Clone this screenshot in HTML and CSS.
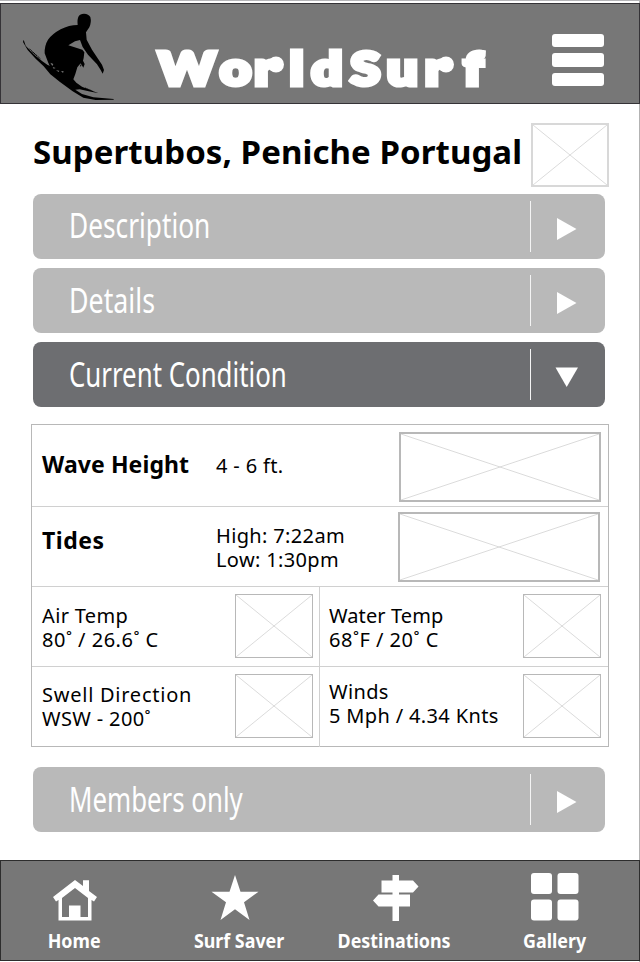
FILE: index.html
```html
<!DOCTYPE html>
<html lang="en">
<head>
<meta charset="utf-8">
<title>WorldSurf</title>
<link rel="stylesheet" href="styles.css">
</head>
<body>
<svg class="defs" aria-hidden="true">
  <symbol id="cross" viewBox="0 0 100 100" preserveAspectRatio="none">
    <path d="M0 0L100 100M100 0L0 100" fill="none" stroke="#d2d2d2" stroke-width="0.8" vector-effect="non-scaling-stroke"/>
  </symbol>
</svg>
<div class="page">
  <header class="header">
    <svg class="surfer" viewBox="0 12 390 294">
      <path d="M236 49Q240 41 252 41Q266 42 271 51Q275 66 268 82L258 97L260 119L276 149L299 184L306 194L312 210L308 221L302 210L291 193L264 164L248 141L240 120L225 124L205 136L247 149L253 157L251 174L249 182L254 192L250 203L242 190L232 202L226 222L220 238L229 248L246 260L270 270L296 280L266 274L239 268L226 269L246 282L280 292L341 297V299L287 300L250 293L218 274L180 246L151 223L131 199L107 176L83 150L69 126L71 119L77 137L101 163L127 184L143 195L149 198L143 184L134 160Q133 137 144 119Q158 101 182 88Q207 75 233 75Q231 58 236 49Z"/>
      <path d="M142 196L163 204L206 208L211 219L204 234L182 224L155 216Z" opacity=".85"/>
      <path d="M146 184l12 7 7 11M153 204l19-3M164 215l16 3 12-3M88 146l20 20M97 155l24 21M245 187l-4 14M255 264l22 9" fill="none" stroke="#000" stroke-width="3" stroke-dasharray="5 2"/>
      <path d="M151 188l9 4-3 6zM168 211l10 1-2 4zM183 213l8 1-2 5zM158 201l9 3-6 2z" fill="#777"/>
    </svg>
    <svg class="logo" viewBox="0 0 340 60" role="img">
      <text class="logo-text" transform="scale(1.17 1)" y="44.500" x="7.3 59.900 89.300 119.500 138 171.300 202.500 235 268">WorldSurf</text>
      <circle cx="126" cy="24.500" r="8"/>
      <circle cx="296" cy="24.500" r="8"/>
    </svg>
    <div class="menu"><i></i><i></i><i></i></div>
  </header>

  <main class="main">
    <div class="title-row">
      <h1>Supertubos, Peniche Portugal</h1>
      <svg class="ph thumb"><use href="#cross"/></svg>
    </div>

    <div class="bar first"><span class="bar-label description">Description</span><span class="toggle"><svg viewBox="0 0 22 22"><path d="M1 0L20.500 11L1 22Z"/></svg></span></div>
    <div class="bar"><span class="bar-label details">Details</span><span class="toggle"><svg viewBox="0 0 22 22"><path d="M1 0L20.500 11L1 22Z"/></svg></span></div>
    <div class="bar active"><span class="bar-label">Current Condition</span><span class="toggle"><svg viewBox="0 0 22 22"><path d="M-.5 1.500H22L10.700 21Z"/></svg></span></div>

    <section class="conditions">
      <div class="wide wave"><h2>Wave Height</h2><p>4 - 6 ft.</p><svg class="ph"><use href="#cross"/></svg></div>
      <div class="wide tides"><h2>Tides</h2><p>High: 7:22am<br>Low: 1:30pm</p><svg class="ph"><use href="#cross"/></svg></div>
      <div class="half">
        <div class="cell"><p>Air Temp<br><span class="temp">80˚ / 26.6˚ C</span></p><svg class="ph thumb"><use href="#cross"/></svg></div>
        <div class="cell"><p><span class="tight">Water Temp</span><br><span class="temp">68˚F / 20˚ C</span></p><svg class="ph thumb"><use href="#cross"/></svg></div>
      </div>
      <div class="half last">
        <div class="cell swell"><p><span class="loose">Swell Direction</span><br>WSW - 200˚</p><svg class="ph thumb"><use href="#cross"/></svg></div>
        <div class="cell winds"><p>Winds<br>5 Mph / 4.34 Knts</p><svg class="ph thumb"><use href="#cross"/></svg></div>
      </div>
    </section>

    <div class="bar members"><span class="bar-label">Members only</span><span class="toggle"><svg viewBox="0 0 22 22"><path d="M1 0L20.500 11L1 22Z"/></svg></span></div>
  </main>

  <nav class="nav">
    <a class="home"><svg viewBox="0 0 48 48">
      <path fill-rule="evenodd" d="M24 7L32 13V7.300H38V18L46 24L43 28.500L40.500 27V47.500H7.500V27L5 28.500L2 24ZM24 15L11 25V44H18V32.500H29.500V44H37V25Z"/></svg><span>Home</span></a>
    <a class="saver"><svg viewBox="0 0 48 48"><path d="M24 2L29.500 18.700H47.500L33 29.300L38.500 47L24 36.200L9.500 47L15 29.300L.5 18.700H18.500Z"/></svg><span>Surf Saver</span></a>
    <a class="dest"><svg viewBox="0 0 48 48"><path d="M21.500 2H28V7.500H42L47.500 13.500L42 19.500H28V21.500H39V33.500H28V48H21.500V33.500H7.500L2 27.500L7.500 21.500H21.500V19.500H10.500V7.500H21.500Z"/></svg><span>Destinations</span></a>
    <a class="gallery"><svg viewBox="0 0 48 48"><rect width="21" height="21" rx="3"/><rect x="26.500" width="21" height="21" rx="3"/><rect y="26.500" width="21" height="21" rx="3"/><rect x="26.500" y="26.500" width="21" height="21" rx="3"/></svg><span>Gallery</span></a>
  </nav>
</div>
</body>
</html>
```
FILE: styles.css
```css
* { box-sizing: border-box; }
body { margin: 0; background: #fff; color: #000; font-family: "Noto Sans", sans-serif; }
h1, h2, p { margin: 0; }
svg { display: block; flex: none; }
.defs { position: absolute; width: 0; height: 0; }

.page {
  width: 640px;
  height: 962px;
  border-top: 1px solid #b5b5b8;
  border-right: 1px solid #b3b3b3;
  display: flex;
  flex-direction: column;
}

.header {
  margin-top: 2px;
  margin-right: -1px;
  height: 101px;
  flex: none;
  background: #777;
  border: 1px solid #353337;
  display: flex;
  align-items: flex-start;
}
.surfer { width: 130px; height: 98px; margin-left: -1px; }
.logo { width: 340px; height: 60px; margin: 36px 0 0 20px; fill: #fff; overflow: visible; }
.logo-text {
  font: 900 46px Lato, sans-serif;
  stroke: #fff;
  stroke-width: 5px;
}
.menu { margin: 30px 0 0 62px; display: grid; gap: 6px; }
.menu i { width: 52px; height: 13.400px; border-radius: 3px; background: #fff; }

.main { flex: none; height: 756px; padding-left: 33px; }
.title-row { height: 90px; display: flex; padding-top: 19px; }
h1 { width: 498px; font-size: 33px; line-height: 40px; padding-top: 9px; letter-spacing: .07px; white-space: nowrap; }
.ph { border: 2px solid #b8b8b8; width: 202px; height: 70px; }
.ph.thumb { width: 78px; height: 64px; border: 1px solid #b8b8b8; }
.title-row .ph.thumb { border: 2px solid #d8d8d8; }

.bar {
  width: 572px;
  height: 65px;
  margin-bottom: 9px;
  border-radius: 8px;
  background: #b9b9b9;
  color: #fff;
  display: flex;
  align-items: center;
  justify-content: space-between;
}
.bar.active { background: #6d6e71; }
.bar.members { margin-top: 20px; }
.bar-label {
  font-size: 35px;
  font-weight: 400;
  line-height: 48px;
  margin: -2px 0 0 36px;
  transform: scaleX(.738);
  transform-origin: left;
  white-space: nowrap;
}
.bar-label.description { transform: scaleX(.75); margin-top: -3px; }
.bar-label.details { transform: scaleX(.765); }
.toggle {
  width: 75px;
  height: 51px;
  border-left: 1.500px solid #f4f4f4;
  display: flex;
  align-items: center;
  padding: 4px 0 0 25px;
}
.toggle svg { width: 22px; height: 22px; fill: #fff; overflow: visible; }

.conditions {
  width: 578px;
  height: 323px;
  margin: 17px 0 0 -2px;
  border: 1px solid #b8b8b8;
  font-size: 20px;
  line-height: 24px;
  letter-spacing: .35px;
  white-space: nowrap;
}
.wide { display: grid; grid-template-columns: 174px 183px 202px; padding-left: 9px; border-bottom: 1px solid #d0d0d0; }
.wave { height: 82px; }
.wide.wave { padding-left: 10px; }
.wave h2 { padding-top: 27px; }
.wave p { padding-top: 29px; }
.wave .ph { margin-top: 7px; }
.tides { height: 80px; }
.tides h2 { padding: 21px 0 0 1px; letter-spacing: .5px; }
.tides p { padding: 17px 0 0 1px; }
.tides .ph { margin-top: 5px; }
h2 { font-size: 23px; line-height: 24px; letter-spacing: .1px; }
.half { display: grid; grid-template-columns: 287px 289px; height: 80px; border-bottom: 1px solid #d0d0d0; }
.half.last { border-bottom: 0; }
.cell { display: flex; justify-content: space-between; padding: 17px 6px 0 10px; }
.cell + .cell { border-left: 1px solid #d0d0d0; padding: 17px 7px 0 9px; }
.cell .ph { margin-top: -10px; }
.temp { letter-spacing: .5px; }
.tight { letter-spacing: .1px; }
.loose { letter-spacing: .75px; }
.cell.swell { padding-top: 16px; }
.cell.winds { padding-top: 13px; }
.swell .ph { margin-top: -9px; }
.winds .ph { margin-top: -6px; }

.nav {
  height: 101px;
  flex: none;
  margin-right: -1px;
  background: #777;
  border: 1px solid #2d2d2d;
  color: #fff;
  display: grid;
  grid-template-columns: 147px 182px 129px 100px;
  padding-top: 12px;
}
.nav a { display: flex; flex-direction: column; align-items: center; }
.nav .gallery { margin: 0 -46px 0 46px; }
.saver svg { margin-left: -9px; }
.nav svg { width: 48px; height: 48px; fill: #fff; }
.nav span { font-size: 19px; font-weight: 700; line-height: 26px; margin-top: 7px; transform: scaleX(.94); }
```
